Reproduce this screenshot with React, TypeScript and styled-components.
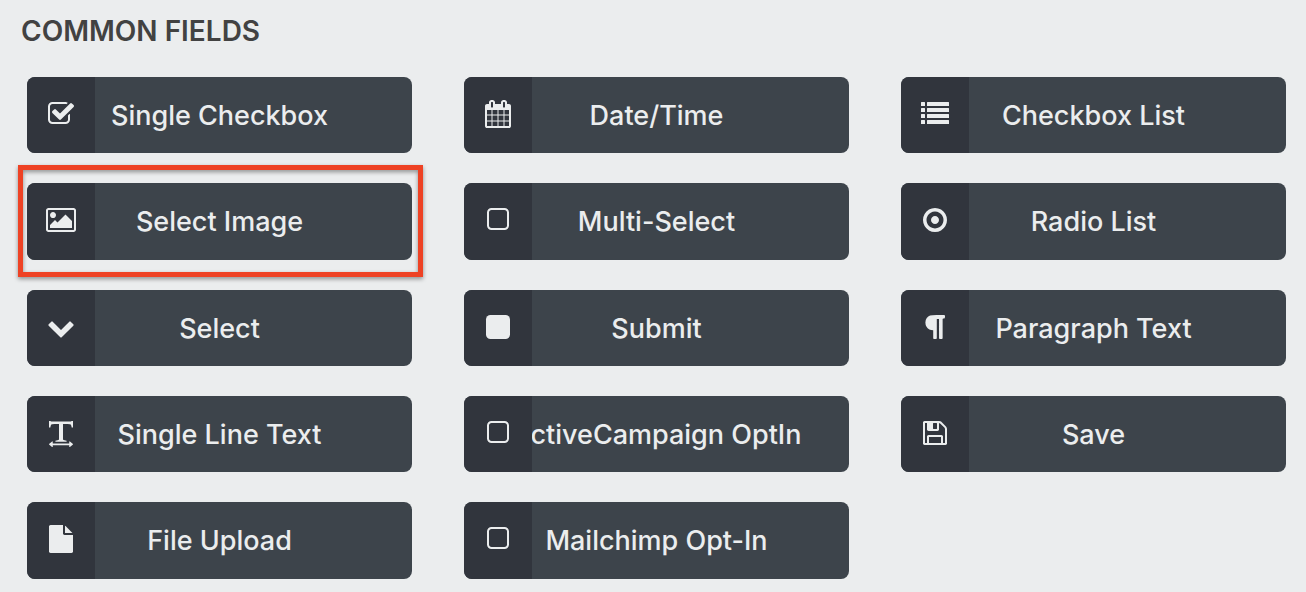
import React from "react";
import styled, { createGlobalStyle } from "styled-components";

const GlobalStyle = createGlobalStyle`
  body {
    margin: 0;
    background: #ebedee;
    font-family: Inter, "Liberation Sans", sans-serif;
  }
`;

const Panel = styled.main`
  padding: 12px 20px 13px 27px;
`;

const Heading = styled.h2`
  margin: 0 0 27px -6px;
  font-size: 28px;
  line-height: 38px;
  font-weight: 600;
  color: #424242;
  text-transform: uppercase;
`;

const FieldGrid = styled.ul`
  display: grid;
  grid-template-columns: repeat(3, minmax(0, 1fr));
  grid-auto-rows: 76px 77px 76px;
  gap: 30px 52px;
  margin: 0;
  padding: 0;
  list-style: none;
`;

const FieldItem = styled.li<{ $highlighted?: boolean }>`
  position: relative;

  ${({ $highlighted }) =>
    $highlighted &&
    `
    &::after {
      content: "";
      position: absolute;
      inset: -18px -11px -17px -9px;
      border: 5px solid #ee4224;
      filter: drop-shadow(0 2px 2px rgba(0, 0, 0, 0.4));
      pointer-events: none;
    }
  `}
`;

const FieldButton = styled.button`
  display: grid;
  grid-template-columns: 68px minmax(0, 1fr);
  width: 100%;
  height: 100%;
  padding: 0;
  border: 0;
  border-radius: 8px;
  overflow: hidden;
  background: #3d444b;
  color: #ebedee;
  font: inherit;
  font-size: 27px;
  font-weight: 500;
  line-height: 38px;
  cursor: pointer;
`;

const IconCell = styled.span`
  grid-area: 1 / 1;
  z-index: 1;
  display: flex;
  align-items: flex-start;
  justify-content: center;
  padding-top: 23px;
  background: #31353d;
`;

const Label = styled.span`
  grid-area: 1 / 1 / 2 / 3;
  padding-top: 20px;
  text-align: center;
  white-space: nowrap;
`;

const Glyph = styled.svg`
  height: 28px;
  fill: currentColor;
`;

type IconName =
  | "check"
  | "calendar"
  | "list"
  | "image"
  | "box"
  | "radio"
  | "chevron"
  | "square"
  | "paragraph"
  | "textWidth"
  | "floppy"
  | "file";

const paths: Record<IconName, string> = {
  check:
    "M1472 930v318q0 119-84.5 203.5t-203.5 84.5h-832q-119 0-203.5-84.5t-84.5-203.5v-832q0-119 84.5-203.5t203.5-84.5h832q63 0 117 25 15 7 18 23 3 17-9 29l-49 49q-10 10-23 10-3 0-9-2-23-6-45-6h-832q-66 0-113 47t-47 113v832q0 66 47 113t113 47h832q66 0 113-47t47-113v-254q0-13 9-22l64-64q10-10 23-10 6 0 12 3 20 8 20 29zm231-489l-814 814q-24 24-57 24t-57-24l-430-430q-24-24-24-57t24-57l110-110q24-24 57-24t57 24l263 263 647-647q24-24 57-24t57 24l110 110q24 24 24 57t-24 57z",
  calendar:
    "M192 1664h288v-288h-288v288zm352 0h320v-288h-320v288zm-352-352h288v-320h-288v320zm352 0h320v-320h-320v320zm-352-384h288v-288h-288v288zm736 736h320v-288h-320v288zm-384-736h320v-288h-320v288zm768 736h288v-288h-288v288zm-384-352h320v-320h-320v320zm-352-864v-288q0-13-9.5-22.5t-22.5-9.5h-64q-13 0-22.5 9.5t-9.5 22.5v288q0 13 9.5 22.5t22.5 9.5h64q13 0 22.5-9.5t9.5-22.5zm736 864h288v-320h-288v320zm-384-384h320v-288h-320v288zm384 0h288v-288h-288v288zm32-480v-288q0-13-9.5-22.5t-22.5-9.5h-64q-13 0-22.5 9.5t-9.5 22.5v288q0 13 9.5 22.5t22.5 9.5h64q13 0 22.5-9.5t9.5-22.5zm384-64v1280q0 52-38 90t-90 38h-1408q-52 0-90-38t-38-90v-1280q0-52 38-90t90-38h128v-96q0-66 47-113t113-47h64q66 0 113 47t47 113v96h384v-96q0-66 47-113t113-47h64q66 0 113 47t47 113v96h128q52 0 90 38t38 90z",
  list: [128, 512, 896, 1280]
    .map(
      (y) =>
        `M32 ${y}h192q32 0 32 32v192q0 32-32 32h-192q-32 0-32-32v-192q0-32 32-32z` +
        `M416 ${y}h1344q32 0 32 32v192q0 32-32 32h-1344q-32 0-32-32v-192q0-32 32-32z`
    )
    .join(""),
  image:
    "M576 576q0 80-56 136t-136 56-136-56-56-136 56-136 136-56 136 56 56 136zm1024 384v448h-1408v-192l320-320 160 160 512-512zm96-704h-1600q-13 0-22.5 9.5t-9.5 22.5v1216q0 13 9.5 22.5t22.5 9.5h1600q13 0 22.5-9.5t9.5-22.5v-1216q0-13-9.5-22.5t-22.5-9.5zm160 32v1216q0 66-47 113t-113 47h-1600q-66 0-113-47t-47-113v-1216q0-66 47-113t113-47h1600q66 0 113 47t47 113z",
  box: "M1312 256h-832q-66 0-113 47t-47 113v832q0 66 47 113t113 47h832q66 0 113-47t47-113v-832q0-66-47-113t-113-47zm288 160v832q0 119-84.5 203.5t-203.5 84.5h-832q-119 0-203.5-84.5t-84.5-203.5v-832q0-119 84.5-203.5t203.5-84.5h832q119 0 203.5 84.5t84.5 203.5z",
  radio:
    "M1152 896q0 106-75 181t-181 75-181-75-75-181 75-181 181-75 181 75 75 181zm-256-544q-148 0-273 73t-198 198-73 273 73 273 198 198 273 73 273-73 198-198 73-273-73-273-198-198-273-73zm768 544q0 209-103 385.5t-279.5 279.5-385.5 103-385.5-103-279.5-279.5-103-385.5 103-385.5 279.5-279.5 385.5-103 385.5 103 279.5 279.5 103 385.5z",
  chevron:
    "M1683 808l-742 741q-19 19-45 19t-45-19l-742-741q-19-19-19-45.5t19-45.5l166-165q19-19 45-19t45 19l531 531 531-531q19-19 45-19t45 19l166 165q19 19 19 45.5t-19 45.5z",
  square:
    "M1664 416v960q0 119-84.5 203.5t-203.5 84.5h-960q-119 0-203.5-84.5t-84.5-203.5v-960q0-119 84.5-203.5t203.5-84.5h960q119 0 203.5 84.5t84.5 203.5z",
  paragraph:
    "M1534 189v73q0 29-18.5 61t-42.5 32q-50 0-54 1-26 6-32 31-3 11-3 64v1152q0 25-18 43t-43 18h-108q-25 0-43-18t-18-43v-1218h-143v1218q0 25-17.5 43t-43.5 18h-108q-26 0-43.5-18t-17.5-43v-496q-147-12-245-59-126-58-192-179-64-117-64-259 0-166 88-286 88-118 209-159 111-37 417-37h479q25 0 43 18t18 43z",
  textWidth:
    "M128 128h90l40 32h1276l40-32h90v420h-84q-20-150-60-200-30-34-200-34h-296v960q0 50 40 70 30 16 190 40v68h-716v-68q160-24 190-40 40-20 40-70v-960h-296q-170 0-200 34-40 50-60 200h-84zM368 1560h1056v-100q0-46 44-22l176 142q40 32 0 64l-176 148q-44 28-44-22v-94h-1056v94q0 50-44 22l-176-148q-40-32 0-64l176-142q44-24 44 22z",
  floppy:
    "M512 1536h768v-384h-768v384zm896 0h128v-896q0-14-10-38.5t-20-34.5l-281-281q-10-10-34-20t-39-10v416q0 40-28 68t-68 28h-576q-40 0-68-28t-28-68v-416h-128v1280h128v-416q0-40 28-68t68-28h832q40 0 68 28t28 68v416zm-384-928v-320q0-13-9.5-22.5t-22.5-9.5h-192q-13 0-22.5 9.5t-9.5 22.5v320q0 13 9.5 22.5t22.5 9.5h192q13 0 22.5-9.5t9.5-22.5zm640 32v928q0 40-28 68t-68 28h-1344q-40 0-68-28t-28-68v-1344q0-40 28-68t68-28h928q40 0 88 20t76 48l280 280q28 28 48 76t20 88z",
  file: "M1152 512v-472q22 14 36 28l408 408q14 14 28 36h-472zm-128 32q0 40 28 68t68 28h544v1056q0 40-28 68t-68 28h-1344q-40 0-68-28t-28-68v-1600q0-40 28-68t68-28h800v544z",
};

// Glyphs that are not drawn on the common 1792-unit square.
const viewBoxes: Partial<Record<IconName, string>> = {
  image: "-64 0 1920 1792",
};

const Icon = ({ name }: { name: IconName }) => (
  <Glyph viewBox={viewBoxes[name] ?? "0 0 1792 1792"} aria-hidden="true">
    <path d={paths[name]} />
  </Glyph>
);

interface Field {
  label: string;
  icon: IconName;
  highlighted?: boolean;
}

const fields: Field[] = [
  { label: "Single Checkbox", icon: "check" },
  { label: "Date/Time", icon: "calendar" },
  { label: "Checkbox List", icon: "list" },
  { label: "Select Image", icon: "image", highlighted: true },
  { label: "Multi-Select", icon: "box" },
  { label: "Radio List", icon: "radio" },
  { label: "Select", icon: "chevron" },
  { label: "Submit", icon: "square" },
  { label: "Paragraph Text", icon: "paragraph" },
  { label: "Single Line Text", icon: "textWidth" },
  { label: "ActiveCampaign OptIn", icon: "box" },
  { label: "Save", icon: "floppy" },
  { label: "File Upload", icon: "file" },
  { label: "Mailchimp Opt-In", icon: "box" },
];

export default function App() {
  return (
    <>
      <GlobalStyle />
      <Panel>
        <Heading>Common Fields</Heading>
        <FieldGrid>
          {fields.map(({ label, icon, highlighted }) => (
            <FieldItem key={label} $highlighted={highlighted}>
              <FieldButton type="button">
                <IconCell>
                  <Icon name={icon} />
                </IconCell>
                <Label>{label}</Label>
              </FieldButton>
            </FieldItem>
          ))}
        </FieldGrid>
      </Panel>
    </>
  );
}
